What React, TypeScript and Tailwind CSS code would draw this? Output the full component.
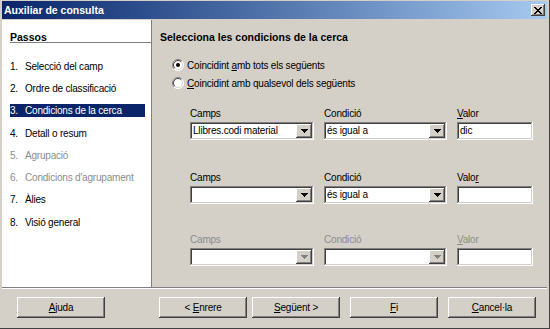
import React from 'react';

const raised =
  'shadow-[inset_-1px_-1px_#404040,inset_1px_1px_#ffffff,inset_-2px_-2px_#808080,inset_2px_2px_#d4d0c8]';
const sunken =
  'shadow-[inset_-1px_-1px_#ffffff,inset_1px_1px_#808080,inset_-2px_-2px_#d4d0c8,inset_2px_2px_#404040]';

const steps: { n: string; label: string; state?: 'sel' | 'off' }[] = [
  { n: '1.', label: 'Selecció del camp' },
  { n: '2.', label: 'Ordre de classificació' },
  { n: '3.', label: 'Condicions de la cerca', state: 'sel' },
  { n: '4.', label: 'Detall o resum' },
  { n: '5.', label: 'Agrupació', state: 'off' },
  { n: '6.', label: "Condicions d'agrupament", state: 'off' },
  { n: '7.', label: 'Àlies' },
  { n: '8.', label: 'Visió general' },
];

function Arrow({ off }: { off?: boolean }) {
  const c = off ? '#808080' : '#000000';
  return (
    <svg width="7" height="4" shapeRendering="crispEdges">
      <rect x="0" y="0" width="7" height="1" fill={c} />
      <rect x="1" y="1" width="5" height="1" fill={c} />
      <rect x="2" y="2" width="3" height="1" fill={c} />
      <rect x="3" y="3" width="1" height="1" fill={c} />
    </svg>
  );
}

function Combo({ value, off }: { value?: string; off?: boolean }) {
  return (
    <div className={`h-[18px] bg-white ${sunken} flex items-center p-[2px]`}>
      <span className="flex-1 pl-[1px] leading-[14px] whitespace-nowrap overflow-hidden">{value}</span>
      <div className={`w-[16px] h-[14px] bg-[#d4d0c8] ${raised} flex items-center justify-center`}>
        <Arrow off={off} />
      </div>
    </div>
  );
}

function Field({ value }: { value?: string }) {
  return (
    <div className={`h-[18px] bg-white ${sunken} px-[3px] leading-[18px]`}>{value}</div>
  );
}

function Radio({ on }: { on?: boolean }) {
  return (
    <svg width="12" height="12" viewBox="0 0 12 12">
      <circle cx="6" cy="6" r="5.5" fill="#ffffff" />
      <path d="M2.1 9.9 A5.5 5.5 0 0 1 9.9 2.1" fill="none" stroke="#808080" strokeWidth="1" />
      <path d="M9.9 2.1 A5.5 5.5 0 0 1 2.1 9.9" fill="none" stroke="#ffffff" strokeWidth="1" />
      <path d="M2.8 9.2 A4.5 4.5 0 0 1 9.2 2.8" fill="none" stroke="#404040" strokeWidth="1" />
      <path d="M9.2 2.8 A4.5 4.5 0 0 1 2.8 9.2" fill="none" stroke="#d4d0c8" strokeWidth="1" />
      {on && <circle cx="6" cy="6" r="2" fill="#000000" />}
    </svg>
  );
}

function Group({ camps, cond, valor, off, valorU }: { camps?: string; cond?: string; valor?: string; off?: boolean; valorU?: 'first' | 'last' }) {
  const lbl = off ? 'text-[#8c8c8c]' : 'text-black';
  return (
    <div className="grid grid-cols-[124px_123px_76px] gap-x-[10px]">
      <div className={`h-[13px] leading-[13px] ${lbl}`}>Camps</div>
      <div className={`h-[13px] leading-[13px] ${lbl}`}>Condició</div>
      <div className={`h-[13px] leading-[13px] ${lbl}`}>
        {valorU === 'first' ? (
          <>
            <u>V</u>alor
          </>
        ) : (
          <>
            Valo<u>r</u>
          </>
        )}
      </div>
      <div className="mt-[2px]">
        <Combo value={camps} off={off} />
      </div>
      <div className="mt-[2px]">
        <Combo value={cond} off={off} />
      </div>
      <div className="mt-[2px]">
        <Field value={valor} />
      </div>
    </div>
  );
}

function Btn({ children, cls }: { children: React.ReactNode; cls?: string }) {
  return (
    <div className={`w-[88px] h-[21px] bg-[#d4d0c8] ${raised} flex items-center justify-center whitespace-pre ${cls ?? ''}`}>
      {children}
    </div>
  );
}

export default function App() {
  return (
    <div className="w-[550px] h-[329px] bg-[#d4d0c8] flex flex-col pl-[2px] pr-[2px] border-r border-b border-[#404040] font-['Liberation_Sans',Arial,sans-serif] text-[10px] tracking-[-0.2px] text-black">
      {/* title bar */}
      <div className="mt-[1px] h-[18px] flex items-center justify-between pl-[2px] pr-[2px] bg-gradient-to-r from-[#0a246a] to-[#a6caf0]">
        <span className="text-white font-bold text-[10.5px] tracking-normal leading-[18px]">Auxiliar de consulta</span>
        <div className={`w-[14px] h-[12px] bg-[#d4d0c8] ${raised} flex items-center justify-center`}>
          <svg width="8" height="7" viewBox="0 0 8 7" shapeRendering="crispEdges">
            <path d="M0 0h2v1h1v1h2V1h1V0h2v1H7v1H6v1H5v1h1v1h1v1h1v1H6V6H5V5H3v1H2v1H0V6h1V5h1V4h1V3H2V2H1V1H0z" fill="#000" />
          </svg>
        </div>
      </div>

      <div className="mt-[1px] h-[267px] flex">
        {/* steps */}
        <div className="w-[150px] bg-white border-r border-[#808080] pt-[11px]">
          <div className="ml-[8px] font-bold text-[10.5px] tracking-normal h-[13px] leading-[13px]">Passos</div>
          <div className="ml-[8px] mt-[-2px] h-[1px] bg-[#808080]" />
          <div className="mt-[12px] flex flex-col">
            {steps.map((s) => (
              <div key={s.n} className="h-[22.3px] flex items-center pl-[8px]">
                <div
                  className={`w-[135px] h-[13px] leading-[13px] flex whitespace-nowrap ${
                    s.state === 'sel' ? 'bg-[#0a246a] text-white' : s.state === 'off' ? 'text-[#8c8c8c]' : ''
                  }`}
                >
                  <span className="w-[15px]">{s.n}</span>
                  <span>{s.label}</span>
                </div>
              </div>
            ))}
          </div>
        </div>

        {/* conditions */}
        <div className="flex-1 pl-[8px] pt-[11px]">
          <div className="font-bold text-[10.5px] tracking-normal h-[13px] leading-[13px]">Selecciona les condicions de la cerca</div>
          <div className="mt-[12px] pl-[12px]">
            <div className="h-[18px] flex items-center gap-[3px]">
              <Radio on />
              <span>
                Coincidint <u>a</u>mb tots els següents
              </span>
            </div>
            <div className="h-[18px] flex items-center gap-[3px]">
              <Radio />
              <span>
                <u>C</u>oincidint amb qualsevol dels següents
              </span>
            </div>
          </div>
          <div className="ml-[30px]">
            <div className="mt-[15px]">
              <Group camps="Llibres.codi material" cond="és igual a" valor="dic" valorU="first" />
            </div>
            <div className="mt-[31px]">
              <Group cond="és igual a" valorU="last" />
            </div>
            <div className="mt-[29px]">
              <Group off valorU="first" />
            </div>
          </div>
        </div>
      </div>

      <div className="h-[2px] border-t border-b border-t-[#808080] border-b-white" />

      {/* buttons */}
      <div className="flex pt-[8px] pl-[15px]">
        <Btn>
          <u>A</u>juda
        </Btn>
        <Btn cls="ml-[54px]">
          {'< '}
          <u>E</u>nrere
        </Btn>
        <Btn cls="ml-[5px]">
          <u>S</u>
          {'egüent >'}
        </Btn>
        <Btn cls="ml-[10px]">
          <u>F</u>i
        </Btn>
        <Btn cls="ml-[10px]">
          <u>C</u>ancel·la
        </Btn>
      </div>
    </div>
  );
}
